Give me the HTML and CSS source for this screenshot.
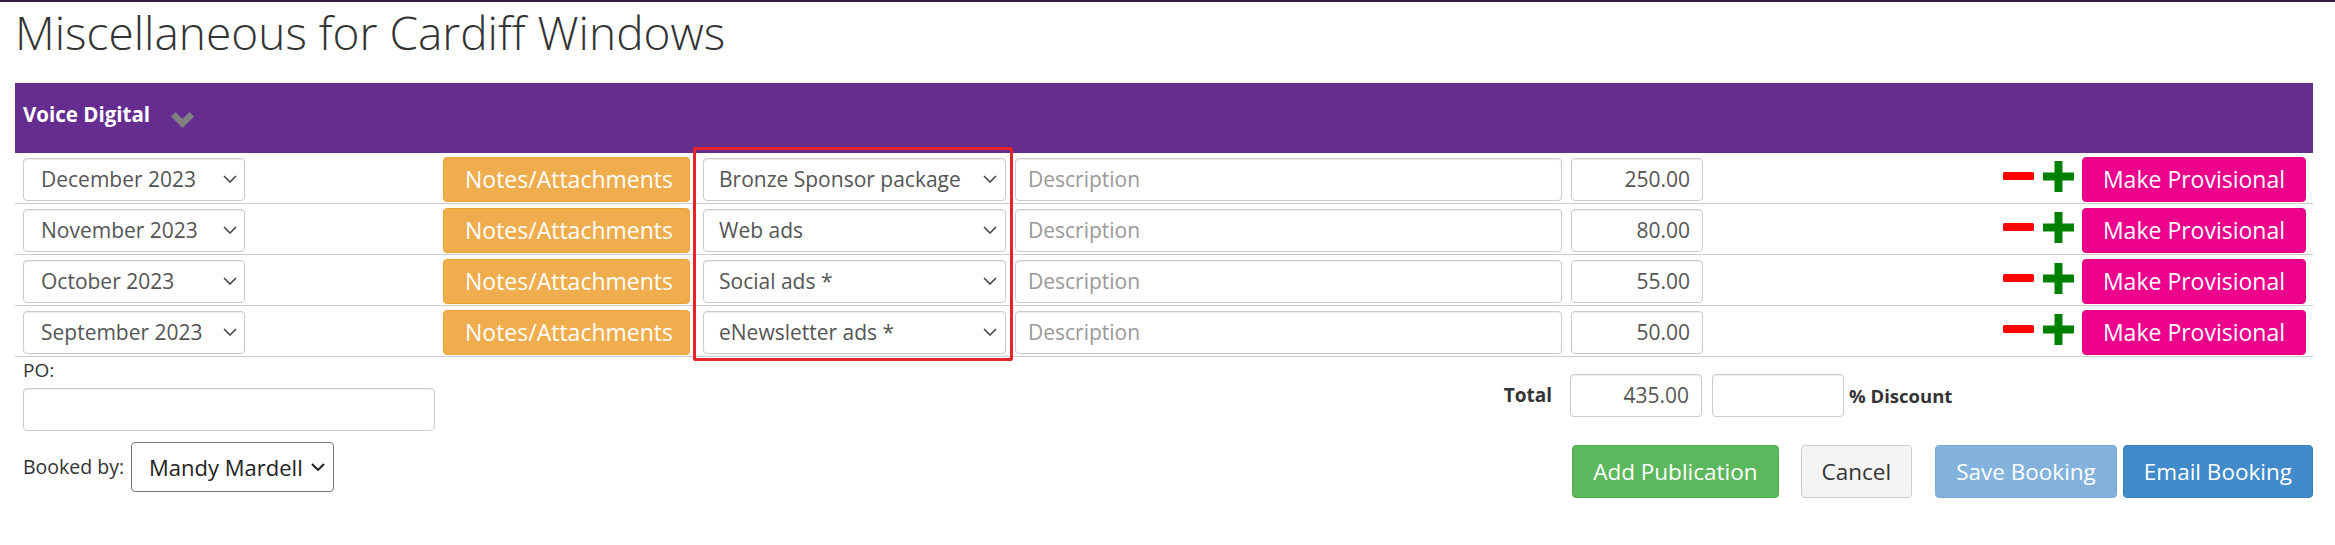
FILE: index.html
```html
<!DOCTYPE html>
<html lang="en">

<head>
    <meta charset="UTF-8">
    <meta name="viewport" content="width=device-width, initial-scale=1.0">
    <title>Miscellaneous for Cardiff Windows</title>
    <link rel="stylesheet" href="styles.css">
</head>

<body>
    <h1 class="page-title">Miscellaneous for Cardiff Windows</h1>

    <div class="publication">
        <!-- Publication header -->
        <div class="pub-header">
            <span>Voice Digital</span>
            <svg class="pub-toggle" width="23" height="16" viewBox="0 0 23 16">
                <polygon points="0,4.5 4.5,0 11.5,7 18.5,0 23,4.5 11.5,16" fill="#808080" />
            </svg>
        </div>

        <!-- Booking lines -->
        <div class="item-row">
            <div class="select-wrap month">
                <select class="form-control"><option>December 2023</option></select>
                <svg class="select-arrow" width="14" height="8" viewBox="0 0 14 8"><path d="M1 1l6 6 6-6" /></svg>
            </div>
            <button class="btn btn-warning notes">Notes/Attachments</button>
            <div class="select-wrap product">
                <select class="form-control"><option>Bronze Sponsor package</option></select>
                <svg class="select-arrow" width="14" height="8" viewBox="0 0 14 8"><path d="M1 1l6 6 6-6" /></svg>
            </div>
            <input type="text" class="form-control description" placeholder="Description">
            <input type="text" class="form-control amount" value="250.00">
            <svg class="icon-minus" width="31" height="8" viewBox="0 0 31 8"><rect width="31" height="8" rx="1.5" fill="#ff0000" /></svg>
            <svg class="icon-plus" width="31" height="31" viewBox="0 0 31 31"><path d="M11.5 0h8v11.5H31v8H19.5V31h-8V19.5H0v-8h11.5z" fill="#008000" /></svg>
            <button class="btn btn-provisional">Make Provisional</button>
        </div>
        <div class="item-row">
            <div class="select-wrap month">
                <select class="form-control"><option>November 2023</option></select>
                <svg class="select-arrow" width="14" height="8" viewBox="0 0 14 8"><path d="M1 1l6 6 6-6" /></svg>
            </div>
            <button class="btn btn-warning notes">Notes/Attachments</button>
            <div class="select-wrap product">
                <select class="form-control"><option>Web ads</option></select>
                <svg class="select-arrow" width="14" height="8" viewBox="0 0 14 8"><path d="M1 1l6 6 6-6" /></svg>
            </div>
            <input type="text" class="form-control description" placeholder="Description">
            <input type="text" class="form-control amount" value="80.00">
            <svg class="icon-minus" width="31" height="8" viewBox="0 0 31 8"><rect width="31" height="8" rx="1.5" fill="#ff0000" /></svg>
            <svg class="icon-plus" width="31" height="31" viewBox="0 0 31 31"><path d="M11.5 0h8v11.5H31v8H19.5V31h-8V19.5H0v-8h11.5z" fill="#008000" /></svg>
            <button class="btn btn-provisional">Make Provisional</button>
        </div>
        <div class="item-row">
            <div class="select-wrap month">
                <select class="form-control"><option>October 2023</option></select>
                <svg class="select-arrow" width="14" height="8" viewBox="0 0 14 8"><path d="M1 1l6 6 6-6" /></svg>
            </div>
            <button class="btn btn-warning notes">Notes/Attachments</button>
            <div class="select-wrap product">
                <select class="form-control"><option>Social ads *</option></select>
                <svg class="select-arrow" width="14" height="8" viewBox="0 0 14 8"><path d="M1 1l6 6 6-6" /></svg>
            </div>
            <input type="text" class="form-control description" placeholder="Description">
            <input type="text" class="form-control amount" value="55.00">
            <svg class="icon-minus" width="31" height="8" viewBox="0 0 31 8"><rect width="31" height="8" rx="1.5" fill="#ff0000" /></svg>
            <svg class="icon-plus" width="31" height="31" viewBox="0 0 31 31"><path d="M11.5 0h8v11.5H31v8H19.5V31h-8V19.5H0v-8h11.5z" fill="#008000" /></svg>
            <button class="btn btn-provisional">Make Provisional</button>
        </div>
        <div class="item-row">
            <div class="select-wrap month">
                <select class="form-control"><option>September 2023</option></select>
                <svg class="select-arrow" width="14" height="8" viewBox="0 0 14 8"><path d="M1 1l6 6 6-6" /></svg>
            </div>
            <button class="btn btn-warning notes">Notes/Attachments</button>
            <div class="select-wrap product">
                <select class="form-control"><option>eNewsletter ads *</option></select>
                <svg class="select-arrow" width="14" height="8" viewBox="0 0 14 8"><path d="M1 1l6 6 6-6" /></svg>
            </div>
            <input type="text" class="form-control description" placeholder="Description">
            <input type="text" class="form-control amount" value="50.00">
            <svg class="icon-minus" width="31" height="8" viewBox="0 0 31 8"><rect width="31" height="8" rx="1.5" fill="#ff0000" /></svg>
            <svg class="icon-plus" width="31" height="31" viewBox="0 0 31 31"><path d="M11.5 0h8v11.5H31v8H19.5V31h-8V19.5H0v-8h11.5z" fill="#008000" /></svg>
            <button class="btn btn-provisional">Make Provisional</button>
        </div>

        <!-- highlight round the product column -->
        <div class="highlight"></div>

        <!-- Footer: PO, booked by, totals, actions -->
        <div class="booking-footer">
            <div class="footer-left">
                <label for="po" class="po-label">PO:</label>
                <input type="text" id="po" class="form-control po-input">
                <div class="booked-by">
                    <label for="bookedBy">Booked by:</label>
                    <div class="select-wrap booked">
                        <select id="bookedBy" class="booked-select"><option>Mandy Mardell</option></select>
                        <svg class="select-arrow" width="14" height="8" viewBox="0 0 14 8"><path d="M1 1l6 6 6-6" /></svg>
                    </div>
                </div>
            </div>

            <div class="footer-right">
                <div class="totals">
                    <label class="total-label">Total</label>
                    <input type="text" class="form-control amount" value="435.00">
                    <input type="text" class="form-control amount discount">
                    <label class="discount-label">% Discount</label>
                </div>
                <div class="actions">
                    <button class="btn btn-success">Add Publication</button>
                    <button class="btn btn-default cancel">Cancel</button>
                    <button class="btn btn-primary save" disabled>Save Booking</button>
                    <button class="btn btn-primary email">Email Booking</button>
                </div>
            </div>
        </div>
    </div>
</body>

</html>
```

FILE: styles.css
```css
body {
    font-family: "Open Sans", Arial, sans-serif;
    font-size: 21px;
    color: #333;
    background-color: #fff;
    margin: 0;
    padding: 0 22px 0 15px;
    border-top: 2px solid #34183d;
}

.page-title {
    font-size: 46px;
    font-weight: 300;
    line-height: 1.1;
    color: #333;
    margin: 5px 0 25px 0;
}

.publication {
    position: relative;
}

.pub-header {
    display: flex;
    align-items: flex-start;
    height: 70px;
    box-sizing: border-box;
    padding: 20px 8px 0;
    background-color: #652d90;
    color: #fff;
    font-size: 20.5px;
    font-weight: bold;
    line-height: 22px;
}

.pub-toggle {
    margin: 9px 0 0 21px;
}

.item-row {
    display: flex;
    align-items: center;
    height: 51px;
    box-sizing: border-box;
    padding: 4px 7px 1px 8px;
    border-bottom: 1px solid #ccc;
}

.form-control {
    height: 43px;
    box-sizing: border-box;
    padding: 0 12px;
    border: 1px solid #ccc;
    border-radius: 4px;
    box-shadow: inset 0 1px 1px rgba(0, 0, 0, 0.075);
    background-color: #fff;
    font-family: inherit;
    font-size: 21px;
    color: #555;
}

.form-control::placeholder {
    color: #999;
}

/* selects draw their own chevron */
.select-wrap {
    position: relative;
    display: flex;
}

.select-wrap select {
    width: 100%;
    appearance: none;
    -webkit-appearance: none;
    padding-left: 17px;
    padding-right: 30px;
}

.select-arrow {
    position: absolute;
    right: 8px;
    top: 50%;
    margin-top: -4px;
    fill: none;
    stroke: #444;
    stroke-width: 1.6;
    pointer-events: none;
}

.month {
    width: 222px;
}

.notes {
    margin-left: 198px;
    width: 247px;
}

.product {
    margin-left: 13px;
    width: 303px;
}

.product select {
    padding-left: 15px;
}

.product .select-arrow {
    right: 9px;
}

.description {
    margin-left: 9px;
    width: 547px;
}

.amount {
    margin-left: 9px;
    width: 132px;
    text-align: right;
}

.icon-minus {
    margin-left: auto;
    margin-right: 9px;
    margin-top: -7px;
}

.icon-plus {
    margin-right: 8px;
    margin-top: -6px;
}

.btn {
    height: 45px;
    box-sizing: border-box;
    padding: 0 21px;
    border: 1px solid transparent;
    border-radius: 4px;
    font-family: inherit;
    font-size: 23px;
    color: #fff;
    cursor: pointer;
}

.btn-warning {
    background-color: #f0ad4e;
    border-color: #eea236;
}

.btn-provisional {
    width: 224px;
    padding: 0;
    background-color: #ec008c;
    border-color: #e0007f;
}

.btn-success {
    background-color: #5cb85c;
    border-color: #4cae4c;
}

.btn-default {
    background-color: #f4f4f4;
    border-color: #ccc;
    color: #333;
}

.btn-primary {
    background-color: #428bca;
    border-color: #357ebd;
}

.btn-primary:disabled {
    opacity: 0.65;
    cursor: default;
}

.highlight {
    position: absolute;
    left: 678px;
    top: 64px;
    width: 320px;
    height: 214px;
    box-sizing: border-box;
    border: 3px solid #e8222b;
    border-radius: 2px;
}

.booking-footer {
    display: flex;
    align-items: flex-start;
    padding-left: 8px;
}

.footer-left {
    width: 412px;
}

.po-label {
    display: block;
    font-size: 19px;
    line-height: 26px;
}

.po-input {
    width: 412px;
    margin-top: 5px;
}

.booked-by {
    display: flex;
    align-items: center;
    margin-top: 11px;
    font-size: 19.5px;
}

.booked {
    margin-left: 7px;
    width: 203px;
}

.booked-select {
    height: 50px;
    padding-left: 14px;
    border: 1px solid #767676;
    border-radius: 4px;
    background-color: #fff;
    font-family: inherit;
    font-size: 22px;
    color: #222;
}

.booked .select-arrow {
    right: 9px;
    stroke: #222;
    stroke-width: 2;
}

.footer-right {
    margin-left: auto;
    width: 826px;
}

.totals {
    display: flex;
    align-items: center;
    margin-top: 17px;
    font-size: 19px;
    font-weight: bold;
}

.total-label {
    width: 83px;
    box-sizing: border-box;
    padding-right: 18px;
    text-align: right;
}

.totals .amount {
    margin-left: 0;
}

.totals .discount {
    margin-left: 10px;
}

.discount-label {
    margin-left: 5px;
    font-size: 18.5px;
}

.actions {
    display: flex;
    justify-content: flex-end;
    margin-top: 28px;
}

.actions .btn {
    height: 53px;
    padding: 0 20px;
    font-size: 22.5px;
}

.cancel {
    margin-left: 22px;
}

.save {
    margin-left: 23px;
}

.email {
    margin-left: 6px;
}
```
